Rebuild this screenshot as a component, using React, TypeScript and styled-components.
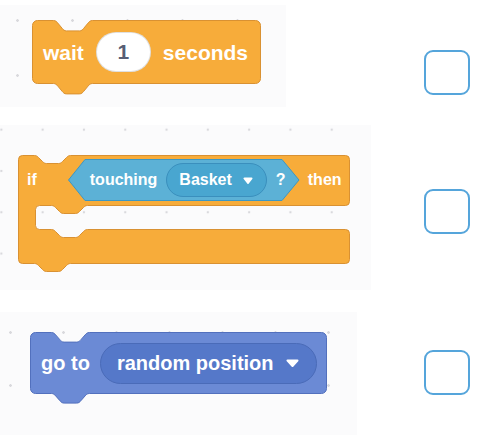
import React from "react";
import styled, { createGlobalStyle } from "styled-components";

const GlobalStyle = createGlobalStyle`
  body {
    margin: 0;
    background: #ffffff;
    font-family: "Liberation Sans", Arial, sans-serif;
  }
`;

// scratch-style notch, kx/ky stretch it; negative kx walks leftwards
const notch = (kx: number, ky: number) =>
  `c ${2 * kx},0 ${3 * kx},${ky} ${4 * kx},${2 * ky} l ${4 * kx},${4 * ky} c ${kx},${ky} ${2 * kx},${2 * ky} ${4 * kx},${2 * ky} h ${12 * kx} c ${2 * kx},0 ${3 * kx},${-ky} ${4 * kx},${-2 * ky} l ${4 * kx},${-4 * ky} c ${kx},${-ky} ${2 * kx},${-2 * ky} ${4 * kx},${-2 * ky}`;

const stackPath = (w: number, h: number, off: number, kx: number, ky: number, r: number) =>
  `M 0,${r} A ${r} ${r} 0 0 1 ${r},0 H ${off} ${notch(kx, ky)} H ${w - r} A ${r} ${r} 0 0 1 ${w},${r} V ${h - r} A ${r} ${r} 0 0 1 ${w - r},${h} H ${off + 36 * kx} ${notch(-kx, ky)} H ${r} A ${r} ${r} 0 0 1 0,${h - r} Z`;

const cPath = (w: number, top: number, mouth: number, bottom: number, arm: number) => {
  const r = 4;
  const m = top + mouth;
  const b = m + bottom;
  return `M 0,${r} A ${r} ${r} 0 0 1 ${r},0 H 16 ${notch(1, 1)} H ${w - r} A ${r} ${r} 0 0 1 ${w},${r} V ${top - r} A ${r} ${r} 0 0 1 ${w - r},${top} H ${arm + 52} ${notch(-1, 1)} H ${arm + r} A ${r} ${r} 0 0 0 ${arm},${top + r} V ${m - r} A ${r} ${r} 0 0 0 ${arm + r},${m} H ${arm + 16} ${notch(1, 1)} H ${w - r} A ${r} ${r} 0 0 1 ${w},${m + r} V ${b - r} A ${r} ${r} 0 0 1 ${w - r},${b} H 52 ${notch(-1, 1)} H ${r} A ${r} ${r} 0 0 1 0,${b - r} Z`;
};

const Page = styled.div`
  display: flex;
  flex-direction: column;
  padding-top: 5px;
`;

const Row = styled.div<{ $h: number; $after: number }>`
  display: flex;
  justify-content: space-between;
  align-items: flex-start;
  height: ${(p) => p.$h}px;
  margin-bottom: ${(p) => p.$after}px;
  padding-right: 24px;
`;

const Panel = styled.div<{ $w: number; $pad: string; $dot: number; $dx: number; $dy: number }>`
  box-sizing: border-box;
  width: ${(p) => p.$w}px;
  height: 100%;
  padding: ${(p) => p.$pad};
  background-color: #fbfbfc;
  background-image: radial-gradient(circle, #d9d9dd 1px, transparent 1.6px);
  background-size: ${(p) => p.$dot}px ${(p) => p.$dot}px;
  background-position: ${(p) => p.$dx}px ${(p) => p.$dy}px;
`;

const Checkbox = styled.div<{ $top: number }>`
  box-sizing: border-box;
  width: 46px;
  height: 45px;
  margin-top: ${(p) => p.$top}px;
  border: 2px solid #55a5db;
  border-radius: 9px;
  background: #ffffff;
`;

const Block = styled.div<{ $w: number; $h: number; $size: number; $pad: string; $gap: number }>`
  position: relative;
  isolation: isolate;
  box-sizing: border-box;
  display: flex;
  align-items: center;
  gap: ${(p) => p.$gap}px;
  width: ${(p) => p.$w}px;
  height: ${(p) => p.$h}px;
  padding: ${(p) => p.$pad};
  font-size: ${(p) => p.$size}px;
  font-weight: 700;
  color: #ffffff;
`;

const Outline = styled.svg`
  position: absolute;
  left: 0;
  top: 0;
  z-index: -1;
  overflow: visible;
`;

const Label = styled.span`
  white-space: nowrap;
  line-height: 1;
`;

const NumberField = styled.div`
  box-sizing: border-box;
  display: flex;
  align-items: center;
  justify-content: center;
  width: 55px;
  height: 40px;
  border-radius: 20px;
  background: #ffffff;
  border: 1px solid rgba(0, 0, 0, 0.12);
  color: #575e75;
`;

const Dropdown = styled.div<{ $fill: string; $edge: string; $h: number; $pad: string; $gap: number }>`
  box-sizing: border-box;
  display: flex;
  align-items: center;
  gap: ${(p) => p.$gap}px;
  height: ${(p) => p.$h}px;
  padding: ${(p) => p.$pad};
  border-radius: ${(p) => p.$h / 2}px;
  background: ${(p) => p.$fill};
  border: 1px solid ${(p) => p.$edge};
`;

const Arrow = ({ w, h }: { w: number; h: number }) => (
  <svg width={w} height={h} viewBox={`0 0 ${w} ${h}`}>
    <path
      d={`M 1.5 1.5 L ${w - 1.5} 1.5 L ${w / 2} ${h - 1} Z`}
      fill="#ffffff"
      stroke="#ffffff"
      strokeWidth={2}
      strokeLinejoin="round"
    />
  </svg>
);

const ORANGE = "#f7ac3a";
const ORANGE_EDGE = "#d99132";

const WaitBlock = () => (
  <Block $w={229} $h={64} $size={21} $pad="0 0 0 11px" $gap={12}>
    <Outline width={229} height={76}>
      <path d={stackPath(228, 63, 21, 1.08, 1.3, 5)} transform="translate(0.5 0.5)" fill={ORANGE} stroke={ORANGE_EDGE} />
    </Outline>
    <Label>wait</Label>
    <NumberField>1</NumberField>
    <Label>seconds</Label>
  </Block>
);

const IfBlock = () => (
  <Block $w={332} $h={50} $size={16} $pad="0 0 0 9px" $gap={8}>
    <Outline width={332} height={118}>
      <path d={cPath(331, 50, 24, 34, 17)} transform="translate(0.5 0.5)" fill={ORANGE} stroke={ORANGE_EDGE} />
    </Outline>
    <Label>if</Label>
    <Block $w={232} $h={42} $size={16} $pad="0 20px 0 22px" $gap={9} style={{ marginLeft: 23 }}>
      <Outline width={232} height={42}>
        <path
          d="M 17,0.5 H 214 L 231,21 L 214,41.5 H 17 L 0.5,21 Z"
          fill="#5cb1d6"
          stroke="#3d97c4"
          strokeLinejoin="round"
        />
      </Outline>
      <Label>touching</Label>
      <Dropdown $fill="#49a6d0" $edge="#3a8fbd" $h={34} $pad="0 13px 0 12px" $gap={11}>
        <Label>Basket</Label>
        <Arrow w={10} h={7} />
      </Dropdown>
      <Label>?</Label>
    </Block>
    <Label>then</Label>
  </Block>
);

const GoToBlock = () => (
  <Block $w={297} $h={62} $size={20} $pad="0 0 0 11px" $gap={10}>
    <Outline width={297} height={74}>
      <path d={stackPath(296, 61, 21, 1.05, 1.2, 5)} transform="translate(0.5 0.5)" fill="#6b8ad5" stroke="#5270bd" />
    </Outline>
    <Label>go to</Label>
    <Dropdown $fill="#5578c9" $edge="#4a6bb8" $h={41} $pad="0 17px 0 16px" $gap={12}>
      <Label>random position</Label>
      <Arrow w={13} h={8} />
    </Dropdown>
  </Block>
);

export default function App() {
  return (
    <>
      <GlobalStyle />
      <Page>
        <Row $h={102} $after={18}>
          <Panel $w={286} $pad="15px 0 0 32px" $dot={55} $dx={-10} $dy={-12}>
            <WaitBlock />
          </Panel>
          <Checkbox $top={45} />
        </Row>
        <Row $h={165} $after={22}>
          <Panel $w={371} $pad="30px 0 0 18px" $dot={41.3} $dx={22} $dy={-16}>
            <IfBlock />
          </Panel>
          <Checkbox $top={64} />
        </Row>
        <Row $h={123} $after={0}>
          <Panel $w={357} $pad="20px 0 0 30px" $dot={53} $dx={-16} $dy={-6}>
            <GoToBlock />
          </Panel>
          <Checkbox $top={38} />
        </Row>
      </Page>
    </>
  );
}
